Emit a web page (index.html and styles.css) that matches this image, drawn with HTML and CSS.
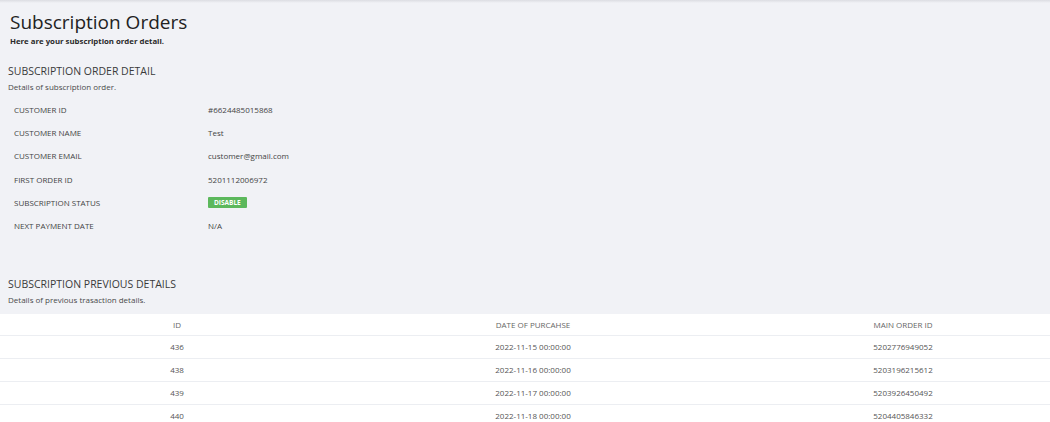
FILE: index.html
```html
<!DOCTYPE html>
<html lang="en">
<head>
  <meta charset="UTF-8" />
  <meta name="viewport" content="width=device-width, initial-scale=1.0"/>
  <title>Subscription Orders</title>
  <link rel="stylesheet" href="styles.css">
</head>
<body>
  <div class="topbar"></div>

  <div class="page-header">
    <h1>Subscription Orders</h1>
    <p class="subtitle">Here are your subscription order detail.</p>
  </div>

  <!-- Order detail -->
  <div class="section">
    <h2>SUBSCRIPTION ORDER DETAIL</h2>
    <p class="section-desc">Details of subscription order.</p>

    <table class="detail-table">
      <tr><th>CUSTOMER ID</th><td>#6624485015868</td></tr>
      <tr><th>CUSTOMER NAME</th><td>Test</td></tr>
      <tr><th>CUSTOMER EMAIL</th><td>customer@gmail.com</td></tr>
      <tr><th>FIRST ORDER ID</th><td>5201112006972</td></tr>
      <tr><th>SUBSCRIPTION STATUS</th><td><span class="badge">DISABLE</span></td></tr>
      <tr><th>NEXT PAYMENT DATE</th><td>N/A</td></tr>
    </table>
  </div>

  <!-- Previous transactions -->
  <div class="section previous">
    <h2>SUBSCRIPTION PREVIOUS DETAILS</h2>
    <p class="section-desc">Details of previous trasaction details.</p>
  </div>

  <table class="history-table">
    <thead>
      <tr><th class="col-id">ID</th><th class="col-date">DATE OF PURCAHSE</th><th class="col-order">MAIN ORDER ID</th></tr>
    </thead>
    <tbody>
      <tr><td class="col-id">436</td><td class="col-date">2022-11-15 00:00:00</td><td class="col-order">5202776949052</td></tr>
      <tr><td class="col-id">438</td><td class="col-date">2022-11-16 00:00:00</td><td class="col-order">5203196215612</td></tr>
      <tr><td class="col-id">439</td><td class="col-date">2022-11-17 00:00:00</td><td class="col-order">5203926450492</td></tr>
      <tr><td class="col-id">440</td><td class="col-date">2022-11-18 00:00:00</td><td class="col-order">5204405846332</td></tr>
    </tbody>
  </table>
</body>
</html>
```

FILE: styles.css
```css
* {
  box-sizing: border-box;
}

body {
  font-family: "Open Sans", Arial, sans-serif;
  margin: 0;
  padding: 0;
  background: #f1f2f6;
  color: #4a4a4a;
}

.topbar {
  height: 3px;
  background: linear-gradient(#dcdde2, #f1f2f6);
}

.page-header {
  padding: 7px 10px 0;
}

h1 {
  margin: 0;
  font-size: 19px;
  font-weight: 400;
  line-height: 25px;
  color: #222;
}

.subtitle {
  margin: 0;
  font-size: 7.8px;
  font-weight: 700;
  line-height: 12px;
  color: #2a2a2a;
}

.section {
  padding: 0 8px;
}

h2 {
  margin: 16px 0 0;
  font-size: 10.5px;
  font-weight: 400;
  line-height: 16px;
  color: #3a3a3a;
}

.section-desc {
  margin: 2px 0 0;
  font-size: 8px;
  line-height: 12px;
  color: #4a4a4a;
}

.detail-table {
  border-collapse: collapse;
  margin-top: 5px;
}

.detail-table th,
.detail-table td {
  height: 23.2px;
  padding: 0 6px;
  font-size: 8px;
  text-align: left;
  vertical-align: middle;
  color: #444;
}

.detail-table th {
  width: 194px;
  font-weight: 400;
}

.badge {
  display: inline-block;
  padding: 0 6px;
  background: #5cb85c;
  color: #fff;
  font-size: 6.5px;
  font-weight: 700;
  line-height: 11px;
  border-radius: 1px;
}

.previous h2 {
  margin-top: 39px;
}

.history-table {
  width: 100%;
  border-collapse: collapse;
  background: #fff;
  margin-top: 8px;
}

.history-table th,
.history-table td {
  height: 23px;
  padding: 0;
  font-size: 8px;
  font-weight: 400;
  text-align: center;
  vertical-align: middle;
  color: #555;
  border-top: 1px solid #eceef2;
}

.history-table th {
  height: 21px;
  border-top: none;
  color: #666;
}

.history-table .col-id {
  width: 354px;
}

.history-table .col-date {
  width: 358px;
}

.history-table .col-order {
  padding-left: 44px;
}
```
